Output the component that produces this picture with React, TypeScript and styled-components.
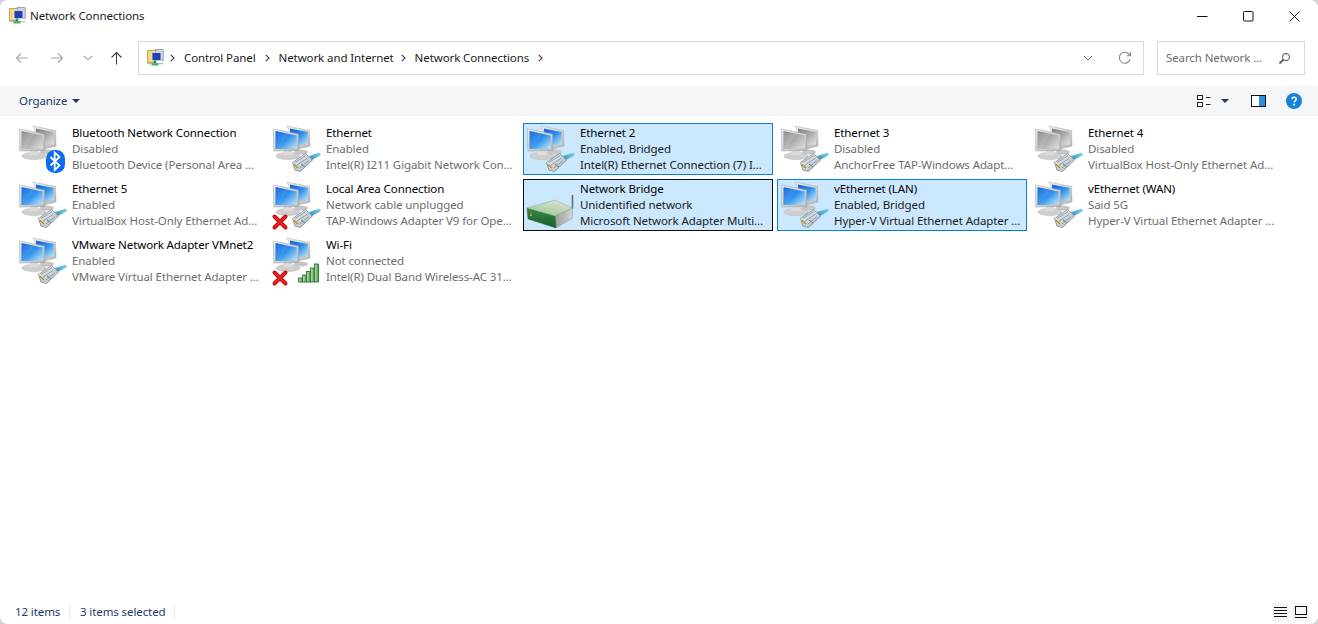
import React from "react";
import styled, { createGlobalStyle } from "styled-components";

const Global = createGlobalStyle`
  html, body { margin: 0; padding: 0; background: #d4d4d4; }
  body { font-family: "Noto Sans", "Liberation Sans", sans-serif; font-size: 11.5px; letter-spacing: -0.1px; color: #000; overflow: hidden; }
  * { box-sizing: border-box; }
`;

const Win = styled.div`
  width: 1318px; height: 624px; background: #fff; border-radius: 8px;
  display: flex; flex-direction: column; overflow: hidden;
`;
const TitleBar = styled.div`
  height: 32px; flex: none; display: flex; align-items: center; padding-left: 9px;
`;
const TitleText = styled.span`margin-left: 4px; line-height: 16px; flex: 1; color: #1a1a1a;`;
const WinBtn = styled.div`
  width: 46px; height: 30px; display: flex; align-items: center; justify-content: center;
`;
const WinBtns = styled.div`display: flex; margin-right: 1px;`;
const NavRow = styled.div`
  height: 34px; margin-top: 9px; flex: none; display: flex; align-items: center; padding-left: 10px;
`;
const NavBtn = styled.div<{ $w: number }>`
  width: ${(p) => p.$w}px; height: 34px; display: flex; align-items: center; justify-content: center;
`;
const AddressBox = styled.div`
  width: 1006px; height: 34px; margin-left: 1px; border: 1px solid #d9d9d9; display: flex; align-items: center; padding-left: 8px;
`;
const Crumbs = styled.div`display: flex; align-items: center; flex: 1; color: #1a1a1a; line-height: 16px; padding-bottom: 1px;`;
const Crumb = styled.span`white-space: nowrap;`;
const Sep = styled.span<{ $w: number; $pad: number }>`
  width: ${(p) => p.$w}px; padding-left: ${(p) => p.$pad}px; display: flex; align-items: center;
`;
const AddrBtn = styled.div`width: 37px; display: flex; justify-content: center; align-items: center;`;
const SearchBox = styled.div`
  width: 148px; height: 34px; margin-left: 13px; border: 1px solid #d9d9d9; display: flex; align-items: center; padding: 0 13px 0 8px;
`;
const SearchText = styled.span`flex: 1; color: #6d6d6d; white-space: nowrap; line-height: 16px; padding-bottom: 1px;`;
const CommandBar = styled.div`
  height: 30px; margin-top: 11px; flex: none; background: #f5f6f7; display: flex; align-items: center; padding-left: 19px;
`;
const Organize = styled.div`display: flex; align-items: center; gap: 5px; flex: 1; color: #1b3a6b; line-height: 16px; padding-bottom: 1px;`;
const CmdIcons = styled.div`display: flex; align-items: center; margin-right: 16px;`;
const CmdIcon = styled.div<{ $w: number }>`width: ${(p) => p.$w}px; display: flex; justify-content: flex-start; align-items: center;`;
const Items = styled.div`
  flex: 1; display: grid; grid-template-columns: repeat(5, 250px); grid-auto-rows: 52px; gap: 4px; padding: 7px 15px 0; align-content: start;
`;
const Item = styled.div<{ $sel?: "blue" | "dark" }>`
  display: flex; gap: 1px; padding: 1px; border: 1px solid ${(p) => (p.$sel === "blue" ? "#0a7fd6" : p.$sel === "dark" ? "#0c1014" : "transparent")};
  background: ${(p) => (p.$sel ? "#cce8ff" : "transparent")};
`;
const ItemText = styled.div`display: flex; flex-direction: column; min-width: 0;`;
const Line = styled.span<{ $dim?: boolean }>`
  height: 16px; line-height: 16px; white-space: nowrap; color: ${(p) => (p.$dim ? "#6d6d6d" : "#000")};
`;
const SelLine = styled(Line)`color: #202020;`;
const StatusBar = styled.div`
  height: 24px; flex: none; display: flex; align-items: center; padding: 0 8px 0 15px; color: #1b3a6b;
`;
const StatusCell = styled.span<{ $w: number }>`
  width: ${(p) => p.$w}px; height: 16px; line-height: 16px; border-right: 1px solid #ececec; white-space: nowrap; margin-right: 10px;
`;
const Spacer = styled.div`flex: 1;`;
const ViewBtn = styled.div`width: 17px; height: 18px; margin-left: 4px; display: flex; align-items: center; justify-content: center; background: #f6f6f6;`;

const Defs = () => (
  <svg width="0" height="0" style={{ position: "absolute" }}>
    <defs>
      <linearGradient id="blueScr" x1="0" y1="0" x2="1" y2="1">
        <stop offset="0" stopColor="#0f5ed6" />
        <stop offset="0.5" stopColor="#2f93ee" />
        <stop offset="1" stopColor="#c6e9fb" />
      </linearGradient>
      <linearGradient id="greyScr" x1="0" y1="0" x2="1" y2="1">
        <stop offset="0" stopColor="#7d7d7d" />
        <stop offset="0.5" stopColor="#ababab" />
        <stop offset="1" stopColor="#e4e4e4" />
      </linearGradient>
      <linearGradient id="bezel" x1="0" y1="0" x2="1" y2="1">
        <stop offset="0" stopColor="#f3f3f3" />
        <stop offset="1" stopColor="#b5b5b5" />
      </linearGradient>
      <linearGradient id="plug" x1="0" y1="0" x2="1" y2="1">
        <stop offset="0" stopColor="#f4f6f7" />
        <stop offset="1" stopColor="#a9b5bc" />
      </linearGradient>
      <linearGradient id="cable" x1="0" y1="1" x2="1" y2="0">
        <stop offset="0" stopColor="#2a8fc2" />
        <stop offset="1" stopColor="#86d6e8" />
      </linearGradient>
      <linearGradient id="bar" x1="0" y1="0" x2="1" y2="0">
        <stop offset="0" stopColor="#c9e7bf" />
        <stop offset="1" stopColor="#3f9a3c" />
      </linearGradient>
      <linearGradient id="routerTop" x1="0" y1="1" x2="0.6" y2="0">
        <stop offset="0" stopColor="#5fb55c" />
        <stop offset="0.35" stopColor="#a9d0a2" />
        <stop offset="1" stopColor="#dcdcd9" />
      </linearGradient>
      <linearGradient id="routerFront" x1="0" y1="0" x2="0" y2="1">
        <stop offset="0" stopColor="#2f8a45" />
        <stop offset="1" stopColor="#1e5c30" />
      </linearGradient>
      <linearGradient id="routerSide" x1="0" y1="0" x2="1" y2="0">
        <stop offset="0" stopColor="#9a9f99" />
        <stop offset="1" stopColor="#d2d5d0" />
      </linearGradient>
    </defs>
  </svg>
);

type Overlay = "bt" | "eth" | "wifi";

const Monitors = ({ on }: { on: boolean }) => {
  const s = on ? "url(#blueScr)" : "url(#greyScr)";
  return (
    <g>
      <path d="M16 1l22.500 4.500.6 15.500-12 3z" fill="url(#bezel)" stroke="#a9a9a9" strokeWidth=".5" />
      <path d="M19 3.500l17.500 3.500.5 12.500L20 20z" fill={s} />
      <ellipse cx="30" cy="27" rx="7" ry="2.500" fill="#c6c6c6" />
      <ellipse cx="17" cy="31" rx="12" ry="3.600" fill="#cfcfcf" stroke="#b3b3b3" strokeWidth=".5" />
      <path d="M13 25h8l1 5h-10z" fill="#dcdcdc" />
      <path d="M2.500 4l25 5 .5 16.500L2.800 26z" fill="url(#bezel)" stroke="#9b9b9b" strokeWidth=".5" />
      <path d="M4.500 6l21 4.500.4 13L4.500 24z" fill={s} />
      <path d="M5 7l12 2-9 15H5z" fill="#fff" opacity={on ? 0.08 : 0.15} />
    </g>
  );
};

const EthPlug = () => (
  <g>
    <path d="M38 31l11-3.500.7 2.800-9 4.700z" fill="url(#cable)" />
    <path d="M21.500 37.500l13-9 7 6.500-12 11.500-5.500-1.500z" fill="url(#plug)" stroke="#74828b" strokeWidth=".8" />
    <path d="M24 37.500l11-7M26 40l10.500-7M29 43l9-7.500" stroke="#8a979f" strokeWidth=".9" fill="none" />
    <path d="M30 39l4 3" stroke="#6c7a83" strokeWidth="1" fill="none" />
    <path d="M23 39.500l4 3.500" stroke="#bd9a33" strokeWidth="1.800" fill="none" />
  </g>
);

const Bt = () => (
  <g>
    <rect x="29" y="25" width="19" height="23" rx="8.500" fill="#0a6cf0" />
    <path d="M33.500 32l9 8.500-4.800 4.500V27.500l4.800 4.500-9 8.500" fill="none" stroke="#fff" strokeWidth="1.800" />
  </g>
);

const RedX = () => (
  <g>
    <path d="M3.500 35.500l11 11M14.500 35.500l-11 11" stroke="#b30d0d" strokeWidth="4" strokeLinecap="round" />
    <path d="M3.500 35.500l11 11M14.500 35.500l-11 11" stroke="#ea2323" strokeWidth="2.200" strokeLinecap="round" />
  </g>
);

const Wifi = () => (
  <g stroke="#24672a" strokeWidth=".8" fill="url(#bar)">
    <rect x="27.500" y="41" width="4" height="4" />
    <rect x="31.500" y="38" width="4" height="7" />
    <rect x="35.500" y="34.500" width="4" height="10.500" />
    <rect x="39.500" y="31" width="4" height="14" />
    <rect x="43.500" y="27" width="4" height="18" />
  </g>
);

const NetIcon = ({ on, overlay, x }: { on: boolean; overlay?: Overlay; x?: boolean }) => (
  <svg width="54" height="50" viewBox="0 0 54 50" style={{ flex: "none" }}>
    <Monitors on={on} />
    {overlay === "bt" && <Bt />}
    {overlay === "eth" && <EthPlug />}
    {overlay === "wifi" && <Wifi />}
    {x && <RedX />}
  </svg>
);

const RouterIcon = () => (
  <svg width="54" height="50" viewBox="0 0 54 50" style={{ flex: "none" }}>
    <path d="M47.500 14v14" stroke="#5f6a66" strokeWidth="1.500" />
    <path d="M30 35l17.500-8v10L31 47z" fill="url(#routerSide)" stroke="#7c827a" strokeWidth=".4" />
    <path d="M2 27l28 8 1 12L3 38z" fill="url(#routerFront)" stroke="#1c5a2f" strokeWidth=".4" />
    <path d="M2 27l28-8 17.500 8L30 35z" fill="url(#routerTop)" stroke="#6c9d68" strokeWidth=".4" />
    <rect x="5" y="31" width="1.800" height="1.500" fill="#e0482c" />
    <rect x="5" y="33.500" width="1.800" height="1.500" fill="#d8b62a" />
  </svg>
);

const SmallCpl = () => (
  <svg width="17" height="18" viewBox="0 0 17 18" style={{ flex: "none" }}>
    <path d="M8 .5h7.500a.8.8 0 0 1 .8.8V11.500H8z" fill="#cfd3da" stroke="#7f8791" strokeWidth=".7" />
    <path d="M.5 1.500h8v12h-8z" fill="#f4d877" stroke="#a38c3c" strokeWidth=".7" />
    <rect x="5" y="3.500" width="9" height="8" fill="#2240b2" stroke="#e3e9f7" strokeWidth=".8" />
    <path d="M8 11.500V15" stroke="#2f8a45" strokeWidth="2.500" />
    <rect x="4.500" y="14" width="7" height="2.500" fill="#2fc25c" />
    <path d="M0 14.700h16" stroke="#9a9a9a" strokeWidth=".8" />
  </svg>
);

const Crumbsep = () => (
  <svg width="5" height="8" viewBox="0 0 5 8"><path d="M.8 .8L4 4 .8 7.200" fill="none" stroke="#444" strokeWidth="1.200" /></svg>
);

const Caret = ({ color = "#1b3a6b" }: { color?: string }) => (
  <svg width="8" height="4" viewBox="0 0 8 4"><path d="M0 0h8L4 4z" fill={color} /></svg>
);

type Row = { n: string; s: string; d: string; on: boolean; ov?: Overlay; x?: boolean; sel?: "blue" | "dark"; router?: boolean };
const rows: Row[] = [
  { n: "Bluetooth Network Connection", s: "Disabled", d: "Bluetooth Device (Personal Area ...", on: false, ov: "bt" },
  { n: "Ethernet", s: "Enabled", d: "Intel(R) I211 Gigabit Network Con...", on: true, ov: "eth" },
  { n: "Ethernet 2", s: "Enabled, Bridged", d: "Intel(R) Ethernet Connection (7) I...", on: true, ov: "eth", sel: "blue" },
  { n: "Ethernet 3", s: "Disabled", d: "AnchorFree TAP-Windows Adapt...", on: false, ov: "eth" },
  { n: "Ethernet 4", s: "Disabled", d: "VirtualBox Host-Only Ethernet Ad...", on: false, ov: "eth" },
  { n: "Ethernet 5", s: "Enabled", d: "VirtualBox Host-Only Ethernet Ad...", on: true, ov: "eth" },
  { n: "Local Area Connection", s: "Network cable unplugged", d: "TAP-Windows Adapter V9 for Ope...", on: true, ov: "eth", x: true },
  { n: "Network Bridge", s: "Unidentified network", d: "Microsoft Network Adapter Multi...", on: true, router: true, sel: "dark" },
  { n: "vEthernet (LAN)", s: "Enabled, Bridged", d: "Hyper-V Virtual Ethernet Adapter ...", on: true, ov: "eth", sel: "blue" },
  { n: "vEthernet (WAN)", s: "Said 5G", d: "Hyper-V Virtual Ethernet Adapter ...", on: true, ov: "eth" },
  { n: "VMware Network Adapter VMnet2", s: "Enabled", d: "VMware Virtual Ethernet Adapter ...", on: true, ov: "eth" },
  { n: "Wi-Fi", s: "Not connected", d: "Intel(R) Dual Band Wireless-AC 31...", on: true, ov: "wifi", x: true },
];

export default function App() {
  return (
    <>
      <Global />
      <Defs />
      <Win>
        <TitleBar>
          <SmallCpl />
          <TitleText>Network Connections</TitleText>
          <WinBtns>
            <WinBtn>
              <svg width="11" height="11" viewBox="0 0 11 11"><path d="M0 5.500h10.500" stroke="#111" /></svg>
            </WinBtn>
            <WinBtn>
              <svg width="11" height="11" viewBox="0 0 11 11"><rect x=".5" y=".5" width="9.500" height="9.500" rx="1" fill="none" stroke="#111" /></svg>
            </WinBtn>
            <WinBtn>
              <svg width="11" height="11" viewBox="0 0 11 11"><path d="M.5.500l10 10M10.500.500l-10 10" stroke="#111" /></svg>
            </WinBtn>
          </WinBtns>
        </TitleBar>
        <NavRow>
          <NavBtn $w={24}>
            <svg width="14" height="12" viewBox="0 0 14 12"><path d="M13 6H1.500M6 1.500L1.500 6 6 10.500" fill="none" stroke="#a6a6a6" strokeWidth="1.100" /></svg>
          </NavBtn>
          <NavBtn $w={46}>
            <svg width="14" height="12" viewBox="0 0 14 12"><path d="M1 6h11.500M8 1.500L12.500 6 8 10.500" fill="none" stroke="#a6a6a6" strokeWidth="1.100" /></svg>
          </NavBtn>
          <NavBtn $w={15}>
            <svg width="10" height="6" viewBox="0 0 10 6"><path d="M1 1l4 3.800L9 1" fill="none" stroke="#a6a6a6" strokeWidth="1.100" /></svg>
          </NavBtn>
          <NavBtn $w={42}>
            <svg width="13" height="14" viewBox="0 0 13 14"><path d="M6.500 13.500V1.500M1.500 6.500l5-5 5 5" fill="none" stroke="#444" strokeWidth="1.100" /></svg>
          </NavBtn>
          <AddressBox>
            <SmallCpl />
            <Crumbs>
              <Sep $w={20} $pad={6}><Crumbsep /></Sep>
              <Crumb>Control Panel</Crumb>
              <Sep $w={23} $pad={9}><Crumbsep /></Sep>
              <Crumb>Network and Internet</Crumb>
              <Sep $w={21} $pad={7}><Crumbsep /></Sep>
              <Crumb>Network Connections</Crumb>
              <Sep $w={21} $pad={9}><Crumbsep /></Sep>
            </Crumbs>
            <AddrBtn>
              <svg width="10" height="6" viewBox="0 0 10 6"><path d="M1 1l4 3.800L9 1" fill="none" stroke="#666" strokeWidth="1" /></svg>
            </AddrBtn>
            <AddrBtn>
              <svg width="14" height="14" viewBox="0 0 14 14"><path d="M12 8.500A5.500 5.500 0 1 1 10.800 3L12.500 4.500M12.500 1v3.800H8.800" fill="none" stroke="#888" strokeWidth="1.100" /></svg>
            </AddrBtn>
          </AddressBox>
          <SearchBox>
            <SearchText>Search Network ...</SearchText>
            <svg width="13" height="13" viewBox="0 0 13 13"><circle cx="8" cy="5" r="3.500" fill="none" stroke="#777" strokeWidth="1.300" /><path d="M5.500 7.500L1.500 11.500" stroke="#666" strokeWidth="2" /></svg>
          </SearchBox>
        </NavRow>
        <CommandBar>
          <Organize>Organize <Caret /></Organize>
          <CmdIcons>
            <CmdIcon $w={24}>
              <svg width="14" height="14" viewBox="0 0 14 14"><g fill="none" stroke="#222"><rect x=".5" y="1.500" width="5" height="4" /><rect x=".5" y="8.500" width="5" height="4" /><path d="M9 3.500h4.500M9 10.500h4.500" /></g></svg>
            </CmdIcon>
            <CmdIcon $w={30}>
              <Caret />
            </CmdIcon>
            <CmdIcon $w={35}>
              <svg width="15" height="12" viewBox="0 0 15 12"><rect x=".5" y=".5" width="14" height="11" fill="#fff" stroke="#111" /><rect x="8" y="1" width="6" height="10" fill="#2a8fe0" /></svg>
            </CmdIcon>
            <CmdIcon $w={16}>
              <svg width="16" height="16" viewBox="0 0 16 16"><circle cx="8" cy="8" r="8" fill="#1584d8" /><path d="M5.800 6.200c.2-2.700 4.500-2.700 4.500-.1 0 1.700-2.200 1.800-2.200 3.500" fill="none" stroke="#fff" strokeWidth="1.500" /><rect x="7.300" y="10.700" width="1.700" height="1.800" fill="#fff" /></svg>
            </CmdIcon>
          </CmdIcons>
        </CommandBar>
        <Items>
          {rows.map((r) => {
            const L = r.sel ? SelLine : Line;
            return (
              <Item key={r.n} $sel={r.sel}>
                {r.router ? <RouterIcon /> : <NetIcon on={r.on} overlay={r.ov} x={r.x} />}
                <ItemText>
                  <Line>{r.n}</Line>
                  <L $dim={!r.sel}>{r.s}</L>
                  <L $dim={!r.sel}>{r.d}</L>
                </ItemText>
              </Item>
            );
          })}
        </Items>
        <StatusBar>
          <StatusCell $w={55}>12 items</StatusCell>
          <StatusCell $w={95}>3 items selected</StatusCell>
          <Spacer />
          <ViewBtn>
            <svg width="14" height="12" viewBox="0 0 14 12"><path d="M0 1.500h13M0 4.500h13M0 7.500h13M0 10.500h13" stroke="#111" /></svg>
          </ViewBtn>
          <ViewBtn>
            <svg width="13" height="13" viewBox="0 0 13 13"><rect x=".5" y=".5" width="11" height="8" fill="none" stroke="#111" /><path d="M0 11.500h12" stroke="#111" /></svg>
          </ViewBtn>
        </StatusBar>
      </Win>
    </>
  );
}
